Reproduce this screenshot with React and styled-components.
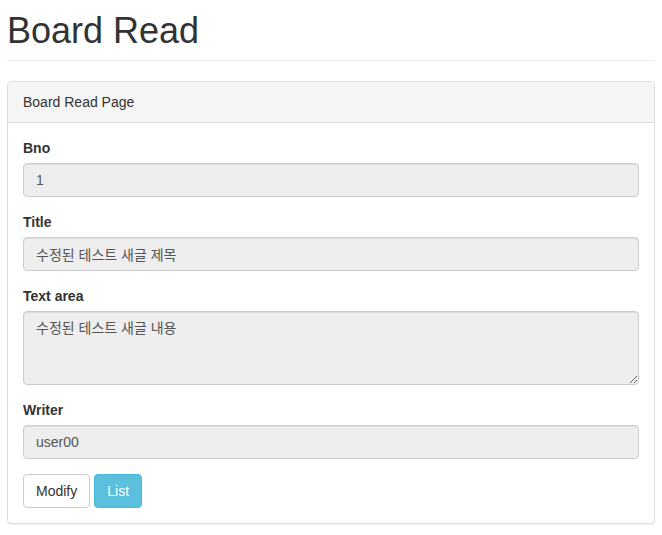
import React from "react";
import styled, { createGlobalStyle } from "styled-components";

const GlobalStyle = createGlobalStyle`
  * {
    box-sizing: border-box;
  }
  body {
    margin: 0;
    background: #fff;
    color: #333;
    font-family: "Liberation Sans", Arial, "Noto Sans CJK KR", sans-serif;
    font-size: 14px;
    line-height: 1.42857143;
  }
`;

const fields = [
  { label: "Bno", value: "1" },
  { label: "Title", value: "수정된 테스트 새글 제목" },
  { label: "Text area", value: "수정된 테스트 새글 내용", multi: true },
  { label: "Writer", value: "user00" },
];

function App() {
  return (
    <>
      <GlobalStyle />
      <PageWrapper>
        <PageHeader>Board Read</PageHeader>
        <Panel>
          <PanelHeading>Board Read Page</PanelHeading>
          <PanelBody>
            {fields.map((f) => (
              <FormGroup key={f.label}>
                <Label>{f.label}</Label>
                {f.multi ? (
                  <TextArea rows={3} readOnly value={f.value} />
                ) : (
                  <Input readOnly value={f.value} />
                )}
              </FormGroup>
            ))}
            <ButtonRow>
              <Button>Modify</Button>
              <Button $variant="info">List</Button>
            </ButtonRow>
          </PanelBody>
        </Panel>
      </PageWrapper>
    </>
  );
}

const PageWrapper = styled.div`
  padding: 0 7px;
`;

const PageHeader = styled.h1`
  margin: 11px 0 20px;
  padding-bottom: 9px;
  border-bottom: 1px solid #eee;
  font-size: 36px;
  font-weight: 500;
  line-height: 1.1;
  color: #333;
`;

const Panel = styled.div`
  margin-bottom: 20px;
  background: #fff;
  border: 1px solid #ddd;
  border-radius: 4px;
  box-shadow: 0 1px 1px rgba(0, 0, 0, 0.05);
`;

const PanelHeading = styled.div`
  padding: 10px 15px;
  background: #f5f5f5;
  border-bottom: 1px solid #ddd;
  border-radius: 3px 3px 0 0;
  color: #333;
`;

const PanelBody = styled.div`
  padding: 15px;
`;

const FormGroup = styled.div`
  margin-bottom: 15px;
`;

const Label = styled.label`
  display: inline-block;
  margin-bottom: 5px;
  font-weight: 700;
`;

const controlStyles = `
  display: block;
  width: 100%;
  padding: 6px 12px;
  font-family: "Liberation Sans", Arial, "Noto Sans CJK KR", sans-serif;
  font-size: 14px;
  line-height: 1.42857143;
  color: #555;
  background: #eee;
  border: 1px solid #ccc;
  border-radius: 4px;
  box-shadow: inset 0 1px 1px rgba(0, 0, 0, 0.075);
  outline: none;
`;

const Input = styled.input`
  ${controlStyles}
  height: 34px;
`;

const TextArea = styled.textarea`
  ${controlStyles}
  height: 74px;
  resize: vertical;
  margin: 0;
`;

const ButtonRow = styled.div`
  display: flex;
  gap: 4px;
`;

const Button = styled.button`
  height: 34px;
  padding: 6px 12px;
  font-family: "Liberation Sans", Arial, sans-serif;
  font-size: 14px;
  line-height: 1.42857143;
  border-radius: 4px;
  border: 1px solid ${(p) => (p.$variant === "info" ? "#46b8da" : "#ccc")};
  background: ${(p) => (p.$variant === "info" ? "#5bc0de" : "#fff")};
  color: ${(p) => (p.$variant === "info" ? "#fff" : "#333")};
  cursor: pointer;
`;

export default App;
